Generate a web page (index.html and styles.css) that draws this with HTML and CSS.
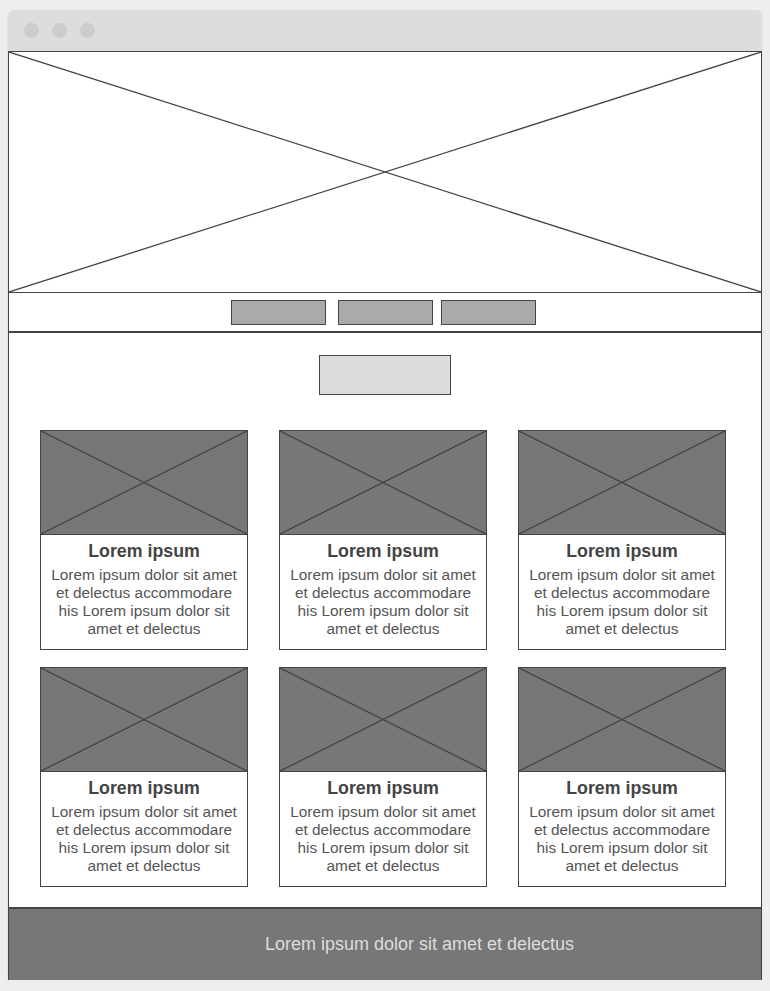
FILE: index.html
```html
<!DOCTYPE html>
<html lang="en">

<head>
    <meta charset="UTF-8">
    <meta name="viewport" content="width=device-width, initial-scale=1.0">
    <title>Wireframe</title>
    <link rel="stylesheet" href="styles.css">
</head>

<body>
    <div class="window">
        <div class="titlebar">
            <span class="dot"></span>
            <span class="dot"></span>
            <span class="dot"></span>
        </div>
        <div class="page">
            <div class="hero">
                <svg class="cross" viewBox="0 0 100 100" preserveAspectRatio="none">
                    <line x1="0" y1="0" x2="100" y2="100" />
                    <line x1="100" y1="0" x2="0" y2="100" />
                </svg>
            </div>
            <div class="nav">
                <span class="nav-btn"></span>
                <span class="nav-btn"></span>
                <span class="nav-btn"></span>
            </div>
            <div class="main">
                <span class="main-btn"></span>
                <div class="cards">
                    <div class="card">
                        <div class="thumb">
                            <svg class="cross" viewBox="0 0 100 100" preserveAspectRatio="none">
                                <line x1="0" y1="0" x2="100" y2="100" />
                                <line x1="100" y1="0" x2="0" y2="100" />
                            </svg>
                        </div>
                        <h3>Lorem ipsum</h3>
                        <p>Lorem ipsum dolor sit amet et delectus accommodare his Lorem ipsum dolor sit amet et delectus</p>
                    </div>
                    <div class="card">
                        <div class="thumb">
                            <svg class="cross" viewBox="0 0 100 100" preserveAspectRatio="none">
                                <line x1="0" y1="0" x2="100" y2="100" />
                                <line x1="100" y1="0" x2="0" y2="100" />
                            </svg>
                        </div>
                        <h3>Lorem ipsum</h3>
                        <p>Lorem ipsum dolor sit amet et delectus accommodare his Lorem ipsum dolor sit amet et delectus</p>
                    </div>
                    <div class="card">
                        <div class="thumb">
                            <svg class="cross" viewBox="0 0 100 100" preserveAspectRatio="none">
                                <line x1="0" y1="0" x2="100" y2="100" />
                                <line x1="100" y1="0" x2="0" y2="100" />
                            </svg>
                        </div>
                        <h3>Lorem ipsum</h3>
                        <p>Lorem ipsum dolor sit amet et delectus accommodare his Lorem ipsum dolor sit amet et delectus</p>
                    </div>
                    <div class="card">
                        <div class="thumb">
                            <svg class="cross" viewBox="0 0 100 100" preserveAspectRatio="none">
                                <line x1="0" y1="0" x2="100" y2="100" />
                                <line x1="100" y1="0" x2="0" y2="100" />
                            </svg>
                        </div>
                        <h3>Lorem ipsum</h3>
                        <p>Lorem ipsum dolor sit amet et delectus accommodare his Lorem ipsum dolor sit amet et delectus</p>
                    </div>
                    <div class="card">
                        <div class="thumb">
                            <svg class="cross" viewBox="0 0 100 100" preserveAspectRatio="none">
                                <line x1="0" y1="0" x2="100" y2="100" />
                                <line x1="100" y1="0" x2="0" y2="100" />
                            </svg>
                        </div>
                        <h3>Lorem ipsum</h3>
                        <p>Lorem ipsum dolor sit amet et delectus accommodare his Lorem ipsum dolor sit amet et delectus</p>
                    </div>
                    <div class="card">
                        <div class="thumb">
                            <svg class="cross" viewBox="0 0 100 100" preserveAspectRatio="none">
                                <line x1="0" y1="0" x2="100" y2="100" />
                                <line x1="100" y1="0" x2="0" y2="100" />
                            </svg>
                        </div>
                        <h3>Lorem ipsum</h3>
                        <p>Lorem ipsum dolor sit amet et delectus accommodare his Lorem ipsum dolor sit amet et delectus</p>
                    </div>
                </div>
            </div>
            <div class="footer">Lorem ipsum dolor sit amet et delectus</div>
        </div>
    </div>
</body>

</html>
```

FILE: styles.css
```css
body {
    margin: 0;
    background-color: #eeeeee;
    font-family: "Liberation Sans", Arial, sans-serif;
}

.window {
    width: 754px;
    margin: 10px 0 0 8px;
    box-shadow: 0 1px 2px rgba(0, 0, 0, 0.12);
    border-radius: 6px 6px 0 0;
}

.titlebar {
    height: 41px;
    background-color: #dddddd;
    border-radius: 6px 6px 0 0;
    display: flex;
    align-items: center;
    gap: 13px;
    padding-left: 16px;
}

.dot {
    width: 15px;
    height: 15px;
    border-radius: 50%;
    background-color: #cccccc;
}

.page {
    border: 1px solid #444444;
    border-bottom: none;
    background-color: #ffffff;
}

.cross {
    display: block;
    width: 100%;
    height: 100%;
}

.cross line {
    stroke: #444444;
    stroke-width: 1.3;
    vector-effect: non-scaling-stroke;
}

.hero {
    height: 240px;
    border-bottom: 1px solid #444444;
}

.nav {
    height: 31px;
    padding: 7px 4px 0 0;
    border-bottom: 2px solid #444444;
    display: flex;
    justify-content: center;
    align-items: flex-start;
    gap: 8px;
}

.nav-btn {
    width: 93px;
    height: 23px;
    background-color: #aaaaaa;
    border: 1px solid #444444;
}

.nav-btn:first-child {
    margin-right: 4px;
}

.main {
    padding: 22px 0 20px 31px;
    display: flex;
    flex-direction: column;
}

.main-btn {
    align-self: center;
    margin-left: -31px;
    width: 130px;
    height: 38px;
    background-color: #dddddd;
    border: 1px solid #444444;
}

.cards {
    margin-top: 35px;
    display: grid;
    grid-template-columns: repeat(3, 208px);
    gap: 17px 31px;
}

.card {
    height: 220px;
    box-sizing: border-box;
    border: 1px solid #444444;
    text-align: center;
}

.thumb {
    height: 103px;
    background-color: #777777;
    border-bottom: 1px solid #444444;
}

.card h3 {
    margin: 6px 0 0;
    font-size: 17.8px;
    line-height: 20px;
    color: #444444;
}

.card p {
    margin: 5px 4px 0;
    font-size: 15.4px;
    line-height: 18px;
    color: #555555;
}

.footer {
    height: 71px;
    border-top: 2px solid #444444;
    background-color: #777777;
    color: #dddddd;
    font-size: 18px;
    display: flex;
    align-items: center;
    justify-content: center;
    padding-left: 69px;
}
```
